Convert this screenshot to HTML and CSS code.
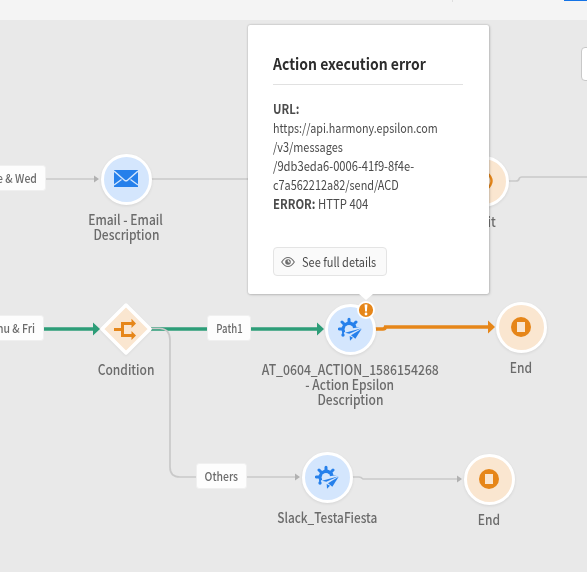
FILE: index.html
```html
<!DOCTYPE html>
<html lang="en">
<head>
<meta charset="utf-8">
<title>Journey canvas</title>
<link rel="stylesheet" href="styles.css">
</head>
<body>
<svg class="symbols" aria-hidden="true">
  <symbol id="action" viewBox="0 0 72 72">
    <path d="M14 49A23 23 0 1 1 56 32L46 35A13 13 0 1 0 22 44Z"/>
    <path d="M33 36V7M33 36L12 15M33 36H4M33 36L54 15M40 35H62" fill="none" stroke="currentColor" stroke-width="9" stroke-linecap="round"/>
    <circle class="disc" cx="33" cy="37" r="13"/>
    <path class="disc" d="M21 45L31 36L72 29V39L48 50L25 49Z"/>
    <path d="M15 42V54" stroke="currentColor" stroke-width="5"/>
    <circle cx="15" cy="54" r="5"/>
    <path d="M21 47L71 34L34 50Z"/>
    <path d="M71 35L52 65L39 55Z"/>
    <path d="M35 57L45 62L36 71Z"/>
  </symbol>
  <symbol id="end" viewBox="0 0 20 20">
    <circle cx="10" cy="10" r="10"/>
    <rect class="hole" x="6" y="5" width="8" height="10"/>
  </symbol>
</svg>

<header class="topbar"><span class="divider"></span><span class="primary"></span></header>
<main class="canvas">
  <svg class="edges" width="587" height="552" viewBox="0 20 587 552">
    <g class="idle">
      <path d="M46 179H95M151 179H475"/>
      <path d="M508 181H516Q518.500 181 519 179T522 177H587"/>
      <path d="M246 477H296M352 477H359Q361 477 363 479H458"/>
    </g>
    <g class="idle-tip"><path d="M94 175.500L99 179L94 182.500ZM295 473.500L300 477L295 480.500ZM457 475.500L462 479L457 482.500Z"/></g>
    <g class="ok"><path d="M44 329H94M151 329H208M250 329H318"/></g>
    <path class="idle" d="M151 328.500H160Q170 329 170 340V467Q170 477 180 477H196"/>
    <path class="ok-tip" d="M93 322.500L100 329L93 335.500ZM317 322.500L324 329L317 335.500Z"/>
    <path class="warn" d="M375 329H383Q385 329 385.500 327H490"/>
    <path class="warn-tip" d="M488 320.500L495 327L488 333.500Z"/>
  </svg>

  <span class="chip chip-wed"><span>Tue &amp; Wed</span></span>
  <span class="chip chip-fri"><span>Thu &amp; Fri</span></span>
  <span class="chip chip-path"><span>Path1</span></span>
  <span class="chip chip-others"><span>Others</span></span>

  <div class="node email blue">
    <div class="ring"><svg width="24" height="17" viewBox="0 0 24 17"><path d="M0 0H24V17H0Z"/><path class="fold" d="M0 1L10.500 10.200Q12 11.500 13.500 10.200L24 1M0 15L7.500 9.500M24 15L16.500 9.500"/></svg></div>
    <p><span>Email - Email</span><span>Description</span></p>
  </div>
  <div class="node wait orange">
    <div class="ring"><svg width="20" height="20" viewBox="0 0 20 20"><path class="clock" d="M10 1.500A8.500 8.500 0 1 1 9.900 1.500ZM10 5V10H14"/></svg></div>
    <p><span>Wait</span></p>
  </div>
  <div class="node condition orange">
    <div class="ring"><svg class="diamond" width="52" height="52" viewBox="0 0 52 52"><path class="face" d="M26 2L50 26L26 50L2 26Z"/><path class="split" d="M14 26.500H22.500M33.500 20.500H22.500V32.500H33.500"/><path d="M31.500 15.700L36 20.500L31.500 25ZM31.500 28L36 32.500L31.500 37Z"/></svg></div>
    <p><span>Condition</span></p>
  </div>
  <div class="node epsilon blue">
    <div class="ring"><svg width="24" height="24"><use href="#action"/></svg></div>
    <p><span class="id">AT_0604_ACTION_1586154268</span><span>- Action Epsilon</span><span>Description</span></p>
  </div>
  <div class="node end-main orange">
    <div class="ring"><svg width="20" height="20"><use href="#end"/></svg></div>
    <p><span>End</span></p>
  </div>
  <div class="node slack blue">
    <div class="ring"><svg width="24" height="24"><use href="#action"/></svg></div>
    <p><span class="name">Slack_TestaFiesta</span></p>
  </div>
  <div class="node end-others orange">
    <div class="ring"><svg width="20" height="20"><use href="#end"/></svg></div>
    <p><span>End</span></p>
  </div>
  <svg class="alert" width="18" height="18" viewBox="0 0 18 18"><circle cx="9" cy="9" r="8"/><path d="M7.600 3.500H10.400L9.900 10.500H8.100Z"/><circle class="dot" cx="9" cy="13" r="1.400"/></svg>
  <button class="tool" aria-label="Zoom"></button>

  <section class="popover">
    <h1><span>Action execution error</span></h1>
    <div class="details"><b>URL:</b><span class="host">https://api.harmony.epsilon.com</span><span class="path">/v3/messages</span><span class="uuid">/9db3eda6-0006-41f9-8f4e-</span><span class="path">c7a562212a82/send/ACD</span><span class="status"><b>ERROR:</b> HTTP 404</span></div>
    <button class="see"><svg width="14" height="12" viewBox="0 0 14 12"><path d="M.7 6Q3.500 1.500 7 1.500T13.300 6Q10.500 10.500 7 10.500T.7 6Z"/><circle class="iris" cx="7" cy="6" r="2.800"/><path class="pupil" d="M7.300 4V6H9"/></svg><span>See full details</span></button>
    <span class="arrow"></span>
  </section>
</main>
</body>
</html>
```
FILE: styles.css
```css
* { box-sizing: border-box; }
body {
  margin: 0;
  width: 587px;
  height: 572px;
  overflow: hidden;
  background: #e9e9e9;
  color: #6b6b6b;
  font-family: "Noto Sans CJK SC", "Open Sans", sans-serif;
}
.symbols { position: absolute; width: 0; height: 0; }
.topbar { position: relative; height: 20px; background: #f4f4f4; }
.primary { position: absolute; left: 564px; top: 0; width: 23px; height: 1px; background: #1473e6; }
.divider { position: absolute; left: 452px; top: 0; width: 1px; height: 2px; background: #dedede; }
.canvas { position: relative; height: 552px; overflow: hidden; }
.edges { position: absolute; left: 0; top: 0; }
.edges path { fill: none; }
.idle, .idle path { stroke: #c9c9c9; stroke-width: 1.7; }
.ok path { stroke: #2d9d78; stroke-width: 3.5; }
.warn { stroke: #e68619; stroke-width: 3.5; }
.edges .idle-tip path { fill: #b1b1b1; }
.edges .ok-tip { fill: #2d9d78; }
.edges .warn-tip { fill: #e68619; }

.chip {
  position: absolute;
  display: flex;
  align-items: center;
  justify-content: center;
  height: 26px;
  padding-bottom: 2px;
  background: #fdfdfd;
  border: 1px solid #f0f0f0;
  border-radius: 3px;
  font-size: 12px;
  font-weight: 500;
  white-space: nowrap;
}
.chip span { transform: scaleX(.87); }
.chip-wed { left: -28px; top: 145px; width: 74px; }
.chip-wed span, .chip-fri span { transform-origin: right; }
.chip-wed, .chip-fri { justify-content: flex-end; padding-right: 8px; }
.chip-fri { left: -27px; top: 295px; width: 71px; }
.chip-path { left: 207px; top: 295px; width: 44px; }
.chip-path span { transform: scaleX(.8); }
.chip-others { left: 196px; top: 443px; width: 51px; }

.node { position: absolute; width: 210px; display: flex; flex-direction: column; align-items: center; }
.ring {
  display: flex;
  align-items: center;
  justify-content: center;
  width: 51px;
  height: 51px;
  border: 3px solid #fff;
  border-radius: 50%;
  box-shadow: 0 1px 3px rgba(0, 0, 0, .09);
}
.node p { display: flex; flex-direction: column; align-items: center; margin: 7.500px 0 0; font-size: 14px; font-weight: 500; line-height: 15px; white-space: nowrap; }
.node p span { transform: scaleX(.858); }
.node p .id { transform: scaleX(.873); }
.node p .name { transform: scaleX(.845); }
.blue { --disc: #d4e6fd; --icon: #2680eb; }
.orange { --disc: #fae6d0; --icon: #e68619; }
.ring { background: var(--disc); }
.ring svg { fill: var(--icon); color: var(--icon); }
.disc, .hole { fill: var(--disc); }
.fold { fill: none; stroke: var(--disc); stroke-width: 1.4; }
.clock { fill: none; stroke: var(--icon); stroke-width: 2.4; }
.email { left: 21px; top: 133.500px; }
.email svg { position: relative; top: -.5px; }
.wait { left: 378px; top: 135.500px; }
.wait p { padding-right: 1px; }
.condition { left: 21px; top: 283.500px; }
.condition .ring { border: 0; background: none; box-shadow: none; }
.diamond { flex: none; overflow: visible; filter: drop-shadow(0 1px 1px rgba(0, 0, 0, .06)); }
.face { fill: var(--disc); stroke: #fff; stroke-width: 3.5; stroke-linejoin: round; }
.split { fill: none; stroke: var(--icon); stroke-width: 3; }
.epsilon { left: 245px; top: 283.500px; }
.end-main { left: 416px; top: 281.500px; }
.slack { left: 222px; top: 431.500px; }
.end-others { left: 384px; top: 433.500px; }
.alert { position: absolute; left: 357px; top: 281px; overflow: visible; }
.alert circle { fill: #e68619; stroke: #fff; stroke-width: 1.8; }
.alert path, .alert .dot { fill: #fff; stroke: none; }
.tool { position: absolute; left: 581px; top: 27px; width: 34px; height: 34px; background: #fff; border: 1px solid #c8c8c8; border-radius: 4px; }

.popover {
  position: absolute;
  left: 248px;
  top: 5px;
  width: 241px;
  height: 269px;
  padding: 26px 26px 26px 25px;
  background: #fff;
  border-radius: 2px;
  box-shadow: 0 0 2px rgba(0, 0, 0, .3), 1px 1px 3px rgba(0, 0, 0, .12);
  color: #4b4b4b;
}
.popover h1 {
  margin: 0 0 14px;
  height: 34px;
  padding-top: 2px;
  border-bottom: 1px solid #e1e1e1;
  color: #2c2c2c;
  font-size: 16px;
  line-height: 20px;
  white-space: nowrap;
}
.popover h1 span { display: inline-block; transform: scaleX(.873); transform-origin: left; }
.details { display: flex; flex-direction: column; align-items: flex-start; font-size: 13px; line-height: 19px; white-space: nowrap; }
.details > * { transform: scaleX(.87); transform-origin: left; }
.details .host { transform: scaleX(.826); }
.details .path { transform: scaleX(.838); }
.details .uuid { transform: scaleX(.86); }
.see {
  display: flex;
  align-items: center;
  gap: 7px;
  width: 114px;
  height: 29px;
  margin-top: 34px;
  padding: 0 6px 0 7px;
  background: #fafafa;
  border: 1px solid #e4e4e4;
  border-radius: 4px;
  color: #4b4b4b;
  font: 13px "Noto Sans CJK SC", "Open Sans", sans-serif;
  white-space: nowrap;
}
.see span { transform: scaleX(.845); transform-origin: left; }
.see svg { flex: none; fill: none; stroke: #6e6e6e; stroke-width: 1.1; }
.see .iris { fill: #6e6e6e; stroke: none; }
.see .pupil { stroke: #fafafa; stroke-width: 1; }
.arrow { position: absolute; left: 111px; top: 269px; border: 7px solid transparent; border-top: 6px solid #fff; border-bottom: 0; }
```
